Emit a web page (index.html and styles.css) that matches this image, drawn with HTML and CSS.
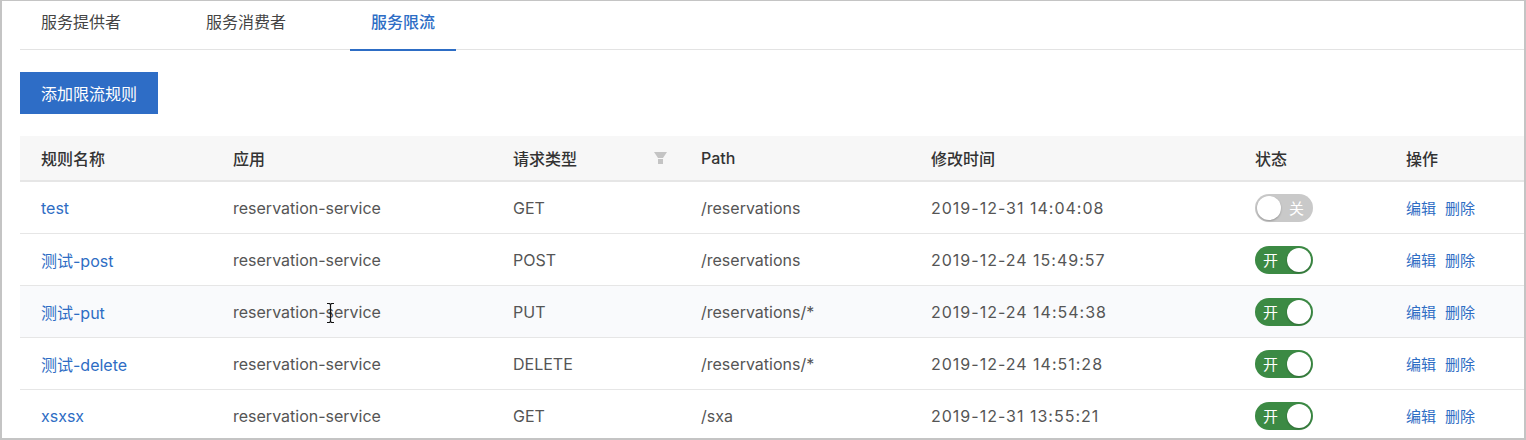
FILE: index.html
```html
<!DOCTYPE html>
<html lang="zh-CN">
<head>
<meta charset="utf-8">
<title>服务限流</title>
<link rel="stylesheet" href="styles.css">
</head>
<body>
<div class="frame">
  <div class="content">
    <div class="tabs">
      <div class="tab">服务提供者</div>
      <div class="tab">服务消费者</div>
      <div class="tab active">服务限流</div>
    </div>
    <div class="toolbar">
      <button class="btn-primary">添加限流规则</button>
    </div>
    <div class="table">
      <div class="row head">
        <div class="cell">规则名称</div>
        <div class="cell">应用</div>
        <div class="cell filter-cell">请求类型
          <svg class="filter" viewBox="0 0 13 12" width="13" height="12"><path d="M0 0H13L9 6H4Z" fill="#c4c4c4"/><rect x="4" y="7" width="5" height="5" fill="#c4c4c4"/></svg>
        </div>
        <div class="cell">Path</div>
        <div class="cell">修改时间</div>
        <div class="cell">状态</div>
        <div class="cell">操作</div>
      </div>
      <div class="row">
        <div class="cell"><a class="link">test</a></div>
        <div class="cell">reservation-service</div>
        <div class="cell">GET</div>
        <div class="cell">/reservations</div>
        <div class="cell time">2019-12-31 14:04:08</div>
        <div class="cell"><span class="switch off"><span class="knob"></span><span class="label">关</span></span></div>
        <div class="cell actions"><a class="link">编辑</a><a class="link">删除</a></div>
      </div>
      <div class="row">
        <div class="cell"><a class="link">测试-post</a></div>
        <div class="cell">reservation-service</div>
        <div class="cell">POST</div>
        <div class="cell">/reservations</div>
        <div class="cell time">2019-12-24 15:49:57</div>
        <div class="cell"><span class="switch on"><span class="label">开</span><span class="knob"></span></span></div>
        <div class="cell actions"><a class="link">编辑</a><a class="link">删除</a></div>
      </div>
      <div class="row hover">
        <div class="cell"><a class="link">测试-put</a></div>
        <div class="cell">reservation-service</div>
        <div class="cell">PUT</div>
        <div class="cell">/reservations/*</div>
        <div class="cell time">2019-12-24 14:54:38</div>
        <div class="cell"><span class="switch on"><span class="label">开</span><span class="knob"></span></span></div>
        <div class="cell actions"><a class="link">编辑</a><a class="link">删除</a></div>
      </div>
      <div class="row">
        <div class="cell"><a class="link">测试-delete</a></div>
        <div class="cell">reservation-service</div>
        <div class="cell">DELETE</div>
        <div class="cell">/reservations/*</div>
        <div class="cell time">2019-12-24 14:51:28</div>
        <div class="cell"><span class="switch on"><span class="label">开</span><span class="knob"></span></span></div>
        <div class="cell actions"><a class="link">编辑</a><a class="link">删除</a></div>
      </div>
      <div class="row">
        <div class="cell"><a class="link">xsxsx</a></div>
        <div class="cell">reservation-service</div>
        <div class="cell">GET</div>
        <div class="cell">/sxa</div>
        <div class="cell time">2019-12-31 13:55:21</div>
        <div class="cell"><span class="switch on"><span class="label">开</span><span class="knob"></span></span></div>
        <div class="cell actions"><a class="link">编辑</a><a class="link">删除</a></div>
      </div>
    </div>
  </div>
  <svg class="cursor" viewBox="0 0 9 22" width="9" height="22"><path d="M1 1.5H3.5L4.5 2.5L5.5 1.5H8M4.5 2.5V19.5M1 20.5H3.5L4.5 19.5L5.5 20.5H8M3 11H6" stroke="#111" stroke-width="1.2" fill="none"/></svg>
</div>
</body>
</html>
```

FILE: styles.css
```css
html, body {
  margin: 0;
  padding: 0;
  background: #fff;
}

body {
  font-family: Inter, "Noto Sans CJK SC", sans-serif;
  font-size: 16px;
  color: #555;
}

.frame {
  position: relative;
  width: 1526px;
  height: 440px;
  box-sizing: border-box;
  border: 2px solid #c4c4c4;
  border-top-width: 1px;
  overflow: hidden;
}

.content {
  padding-left: 18px;
}

.tabs {
  display: flex;
  gap: 43px;
  height: 48px;
  border-bottom: 1px solid #e3e3e3;
}

.tab {
  position: relative;
  padding: 0 21px;
  line-height: 42px;
  color: #444;
  font-size: 16px;
}

.tab.active {
  color: #2d6dc5;
  font-weight: 500;
}

.tab.active::after {
  content: "";
  position: absolute;
  left: 0;
  right: 0;
  bottom: -2px;
  height: 2px;
  background: #2d6dc5;
}

.toolbar {
  padding: 22px 0;
}

.btn-primary {
  display: block;
  width: 138px;
  height: 42px;
  border: none;
  border-radius: 0;
  background: #2e6dc6;
  color: #fff;
  font-family: inherit;
  font-size: 16px;
  padding: 0;
}

.table {
  display: flex;
  flex-direction: column;
}

.row {
  display: grid;
  grid-template-columns: 192px 280px 188px 230px 324px 151px 1fr;
  height: 52px;
  box-sizing: border-box;
  border-bottom: 1px solid #e6e6e6;
  align-items: center;
}

.row.head {
  height: 46px;
  background: #f7f7f7;
  color: #333;
  font-weight: 500;
  border-bottom: 2px solid #e6e6e6;
}

.row.hover {
  background: #f9fafc;
}

.cell {
  padding-left: 21px;
  white-space: nowrap;
}

.time {
  letter-spacing: 1px;
}

.filter-cell {
  display: flex;
  align-items: center;
  justify-content: space-between;
  padding-right: 13px;
}

.filter {
  display: block;
}

.link {
  color: #2e6dc4;
  cursor: pointer;
}

.actions {
  display: flex;
  gap: 9px;
  font-size: 15px;
}

.switch {
  display: flex;
  align-items: center;
  width: 58px;
  height: 28px;
  box-sizing: border-box;
  border-radius: 14px;
  padding: 2px;
  color: #fff;
  font-size: 15px;
}

.switch.off {
  background: #c9c9c9;
  justify-content: space-between;
  padding-right: 9px;
}

.switch.on {
  background: #3c8a44;
  justify-content: space-between;
  padding-left: 8px;
}

.knob {
  width: 24px;
  height: 24px;
  border-radius: 50%;
  background: #fff;
  box-shadow: 0 1px 2px rgba(0, 0, 0, 0.25);
}

.cursor {
  position: absolute;
  left: 324px;
  top: 301px;
}
```
